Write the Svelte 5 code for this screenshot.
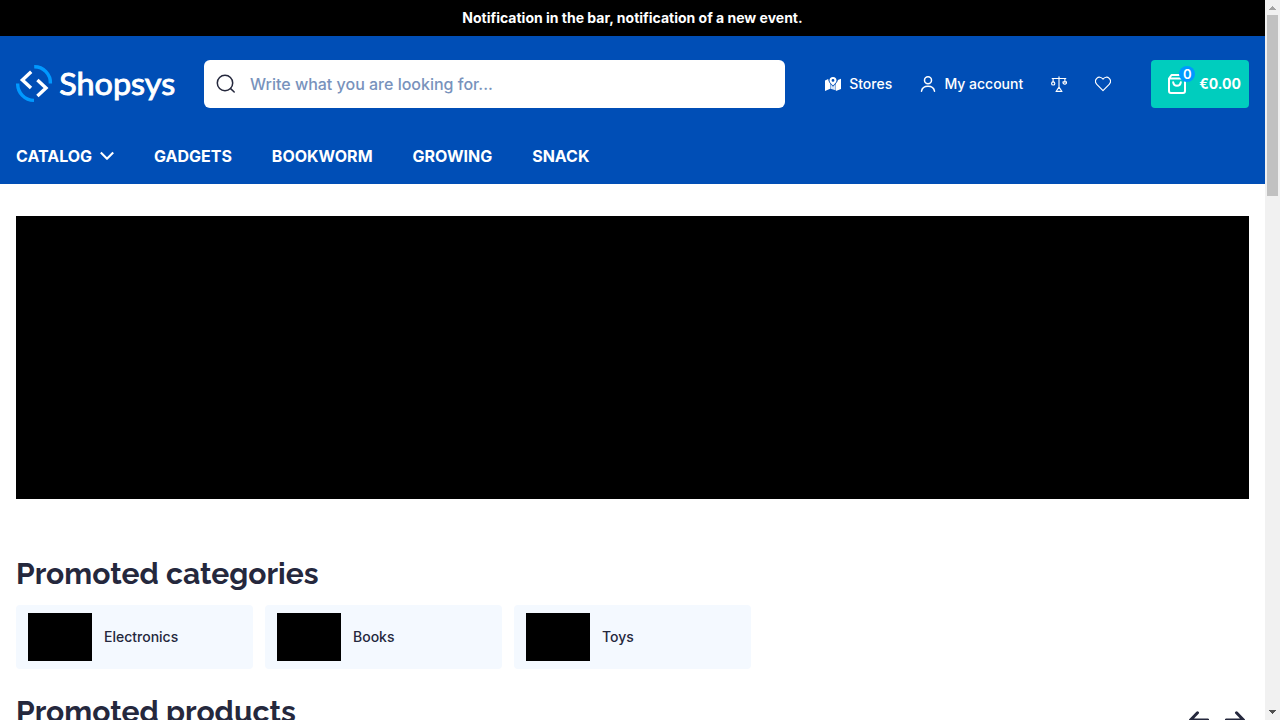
<script>
  const links = ['GADGETS', 'BOOKWORM', 'GROWING', 'SNACK'];
  const categories = ['Electronics', 'Books', 'Toys'];
</script>

<div class="window">
  <div class="page">
    <div class="notice">Notification in the bar, notification of a new event.</div>
    <header>
      <div class="top">
        <svg class="logo" width="160" height="40" viewBox="0 0 160 40" role="img" aria-label="Shopsys">
          <g fill="none" stroke="#0099ff" stroke-width="3.4">
            <path d="M18.2 2.8A16 16 0 0 1 34.4 19.5" />
            <path d="M1.7 19.5A16.4 16.4 0 0 0 18 36.4" />
          </g>
          <g fill="none" stroke="#fff" stroke-width="3.4">
            <path d="M15.2 7.8 6.4 15.9 15 24" />
            <path d="M21.4 15.9 30 24 21.4 32.1" />
          </g>
          <text class="wordmark" x="43.2" y="31" textLength="116" lengthAdjust="spacingAndGlyphs">Shopsys</text>
        </svg>
        <div class="search">
          <svg width="20" height="20" viewBox="0 0 20 20" fill="none" stroke="#25283d" stroke-width="1.5" stroke-linecap="round"><circle cx="9" cy="9" r="7.7" /><path d="m14.6 14.6 3.6 3.4" /></svg>
          <span>Write what you are looking for...</span>
        </div>
        <div class="tools">
          <a class="stores" href="#stores">
            <svg width="16" height="16" viewBox="0 0 16 16">
              <path fill="#fff" d="M0 4.5 3.2 3C3.3 5 4.4 6.5 5.2 7.5V12.8L0 14.9Z" />
              <path fill="#d7e5f7" d="M5.5 8 8 10.8 10.6 8V14.3L5.5 12.8Z" />
              <path fill="#fff" d="M10.9 7.5C12 6 12.8 5 12.9 3.9L16 2.8V13L10.9 14.9Z" />
              <path fill="#fff" fill-rule="evenodd" d="M8 .9a3.5 3.5 0 0 0-3.5 3.5C4.5 6.4 6.8 8.3 8 9.5c1.2-1.2 3.5-3.1 3.5-5.1A3.5 3.5 0 0 0 8 .9Zm0 2.1a1.4 1.4 0 1 1 0 2.8A1.4 1.4 0 0 1 8 3Z" />
            </svg>
            Stores
          </a>
          <a class="account" href="#account">
            <svg width="16" height="16" viewBox="0 0 16 16" fill="none" stroke="#fff" stroke-width="1.5" stroke-linecap="round"><circle cx="8" cy="4.3" r="3.5" /><path d="M1.5 15.2C2 12.2 4.6 10.3 8 10.3s6 1.9 6.5 4.9" /></svg>
            My account
          </a>
          <a class="compare" href="#compare" aria-label="Comparison">
            <svg width="16" height="16" viewBox="0 0 16 16" fill="none" stroke="#fff" stroke-width="1.15" stroke-linecap="round" stroke-linejoin="round"><path d="M8 .7V11.2M1.2 2.5H14.8M2.1 2.7V5.8M13.9 2.7V5.8M8 11.2l-2.3 3.3M8 11.2l2.3 3.3M5 15.3h6" /><circle cx="2.2" cy="7.4" r="1.6" /><path d="M12.1 5.8h3.4a1.8 1.8 0 1 1-3.4 0" /></svg>
          </a>
          <a class="wish" href="#wishlist" aria-label="Wishlist">
            <svg width="16" height="16" viewBox="0 0 16 16" fill="none" stroke="#fff" stroke-width="1.15" stroke-linejoin="round"><path d="M8 3.1C6.4.8 3.5.6 1.8 2.3.2 4 .2 6.6 1.8 8.3L8 14.7l6.2-6.4c1.6-1.7 1.6-4.3 0-6C12.5.6 9.6.8 8 3.1Z" /></svg>
          </a>
        </div>
        <a class="cart" href="#cart">
          <span class="bag">
            <svg width="24" height="24" viewBox="0 0 24 24" fill="none" stroke="#fff" stroke-width="2" stroke-linecap="round" stroke-linejoin="round"><path d="M4 6.5V19q0 2 2 2h12q2 0 2-2V6.5L17.5 3h-11L4 6.5ZM4.5 6.5h15M8.2 10.3c.3 2.2 1.8 3.4 3.8 3.4s3.5-1.2 3.8-3.4" /></svg>
            <b>0</b>
          </span>
          €0.00
        </a>
      </div>
      <nav>
        <a href="#catalog">CATALOG
          <svg width="14" height="10" viewBox="0 0 14 10" fill="none" stroke="#fff" stroke-width="2.1" stroke-linejoin="round"><path d="m.8 1.6 6.2 6.2 6.2-6.2" /></svg>
        </a>
        {#each links as link}<a href="#category">{link}</a>{/each}
      </nav>
    </header>
    <main>
      <div class="banner"></div>
      <h2>Promoted categories</h2>
      <div class="categories">
        {#each categories as category}
          <a href="#category"><span class="thumb"></span>{category}</a>
        {/each}
      </div>
      <div class="products">
        <h2>Promoted products</h2>
        <div class="arrows">
          <svg width="20" height="18" viewBox="0 0 20 18" fill="none" stroke="#25283d" stroke-width="3" stroke-linecap="round" stroke-linejoin="round"><path d="M8.5 1.8 1.5 9 8.5 16.2M1.5 9h17.3" /></svg>
          <svg width="20" height="18" viewBox="0 0 20 18" fill="none" stroke="#25283d" stroke-width="3" stroke-linecap="round" stroke-linejoin="round"><path d="m11.5 1.8 7 7.2-7 7.2M18.5 9H1.2" /></svg>
        </div>
      </div>
    </main>
  </div>
  <div class="scrollbar">
    <svg width="7" height="4" viewBox="0 0 7 4" shape-rendering="crispEdges"><path fill="#a3a3a3" d="M3 0h1v1h1v1h1v1h1v1H0V3h1V2h1V1h1Z" /></svg>
    <i></i>
    <svg class="down" width="7" height="4" viewBox="0 0 7 4" shape-rendering="crispEdges"><path fill="#505050" d="M0 0h7v1H6v1H5v1H4v1H3V3H2V2H1V1H0Z" /></svg>
  </div>
</div>

<style>
  :global(body) { overflow: hidden; background: #fff; }
  .window { display: flex; width: 1280px; height: 720px; overflow: hidden; font-family: Inter, sans-serif; color: #25283d; }
  .page { width: 1265px; height: 720px; overflow: hidden; }
  a { color: inherit; text-decoration: none; }
  svg { display: block; flex: none; }
  .notice { height: 36px; background: #000; color: #fff; font-size: 14px; line-height: 36px; font-weight: 700; text-align: center; }
  header { height: 148px; box-sizing: border-box; background: #004eb6; color: #fff; padding: 24px 16px 0; }
  .top { display: flex; align-items: center; height: 48px; }
  .wordmark { font: 400 31.5px Lato, sans-serif; fill: #fff; stroke: #fff; stroke-width: .9px; }
  .search { display: flex; align-items: center; box-sizing: border-box; width: 581px; height: 48px; margin-left: 28px; padding-left: 11.5px; gap: 14.5px; border-radius: 6px; background: #fff; color: #7892bc; font-size: 16px; font-weight: 500; }
  .tools { display: flex; align-items: center; margin-left: 40.2px; font-size: 14px; line-height: 20px; font-weight: 500; }
  .tools a { display: flex; align-items: center; gap: 8px; white-space: nowrap; }
  .stores { width: 95.2px; }
  .account { width: 130.6px; }
  .compare { width: 44px; }
  .cart { display: flex; align-items: center; justify-content: flex-end; box-sizing: border-box; width: 98px; height: 48px; margin-left: auto; padding-right: 8px; gap: 10px; border-radius: 4px; background: #00cdbe; font-size: 14px; line-height: 20px; font-weight: 700; }
  .bag { position: relative; }
  .bag b { position: absolute; top: -6px; right: -6px; width: 16px; height: 16px; border-radius: 50%; background: #0099ff; font-size: 13px; line-height: 16px; font-weight: 600; text-align: center; }
  nav { display: flex; gap: 39.95px; margin-top: 36px; font-size: 16px; line-height: 24px; font-weight: 700; }
  nav a { display: flex; align-items: center; gap: 8px; }
  main { padding: 32px 16px 0; }
  .banner { height: 283px; background: #000; margin-bottom: 56px; }
  h2 { margin: 0; font: 700 30px/38px Raleway, Lato, sans-serif; }
  .categories { display: grid; grid-template-columns: repeat(5, 1fr); gap: 12px; margin-top: 12px; }
  .categories a { display: flex; align-items: center; gap: 12px; box-sizing: border-box; height: 64px; padding-left: 12px; border-radius: 4px; background: #f4f9ff; font-size: 14px; line-height: 20px; font-weight: 500; }
  .thumb { width: 64px; height: 48px; background: #000; }
  .products { display: flex; justify-content: space-between; margin-top: 24px; }
  .arrows { display: flex; gap: 16px; padding: 18px 4px 0 0; }
  .scrollbar { display: flex; flex-direction: column; align-items: center; box-sizing: border-box; width: 15px; height: 720px; padding: 6px 0; background: #f1f1f1; }
  .scrollbar i { width: 11px; height: 181px; margin-top: 5px; background: #c1c1c1; }
  .down { margin-top: auto; }
</style>
